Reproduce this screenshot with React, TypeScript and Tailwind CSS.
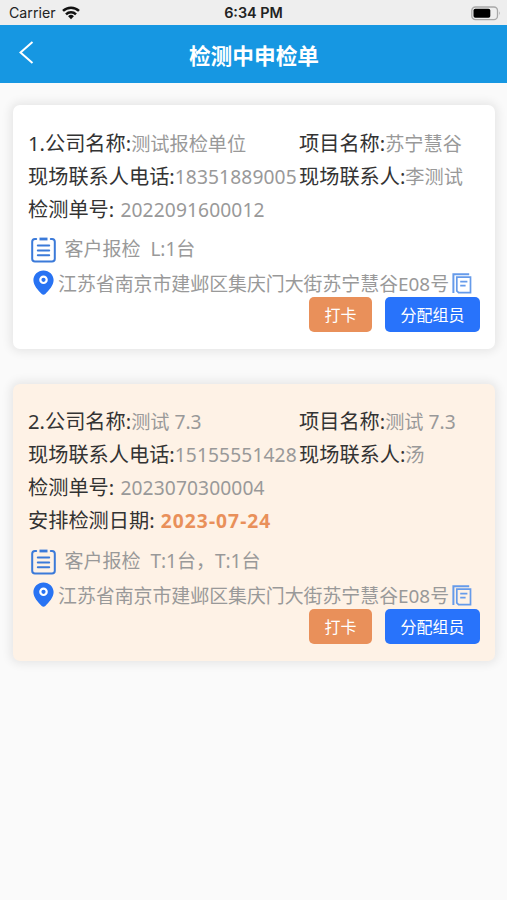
import type { ReactNode } from "react";

type Order = {
  company: string;
  project: string;
  phone: string;
  contact: string;
  code: string;
  date?: string;
  items: string;
  address: string;
};

const orders: Order[] = [
  {
    company: "测试报检单位",
    project: "苏宁慧谷",
    phone: "18351889005",
    contact: "李测试",
    code: "2022091600012",
    items: "L:1台",
    address: "江苏省南京市建邺区集庆门大街苏宁慧谷E08号",
  },
  {
    company: "测试 7.3",
    project: "测试 7.3",
    phone: "15155551428",
    contact: "汤",
    code: "2023070300004",
    date: "2023-07-24",
    items: "T:1台，T:1台",
    address: "江苏省南京市建邺区集庆门大街苏宁慧谷E08号",
  },
];

export default function App() {
  return (
    <div className="min-h-screen w-full overflow-hidden bg-[#fafafa] font-['Noto_Sans','Noto_Sans_CJK_SC',sans-serif]">
      <StatusBar />
      <Header />
      <main className="flex flex-col gap-[35px] pt-[22px] pr-3 pl-[13px]">
        {orders.map((order, i) => (
          <OrderCard key={order.code} order={order} index={i + 1} />
        ))}
      </main>
    </div>
  );
}

function StatusBar() {
  return (
    <div className="grid h-[25px] grid-cols-3 items-center bg-[#eeeeee] pr-[6px] pl-[9px] pt-px font-['Inter',sans-serif] text-[#222]">
      <div className="flex items-center gap-[6px] text-[14.2px]">
        <span>Carrier</span>
        <WifiIcon className="h-[14px] w-[18px]" />
      </div>
      <span className="pr-[3px] text-center text-[14.4px] font-semibold whitespace-nowrap">6:34 PM</span>
      <BatteryIcon className="h-[15px] w-[30px] justify-self-end" />
    </div>
  );
}

function Header() {
  return (
    <header className="grid h-[58px] grid-cols-[60px_1fr_60px] items-center bg-[#1697e2] text-white">
      <BackIcon className="ml-[19px] mb-1 h-[23px] w-[15px]" />
      <h1 className="pt-[3px] pl-px text-center text-[21.7px] leading-8 font-bold">检测中申检单</h1>
    </header>
  );
}

function OrderCard({ order, index }: { order: Order; index: number }) {
  return (
    <section
      className={`flex flex-col rounded-[7px] pr-[15px] pl-[15px] shadow-[0_0_10px_3px_rgba(0,0,0,0.08)] ${
        order.date ? "h-[277px] bg-[#fef2e6] pt-[20px]" : "h-[244px] bg-white pt-[21px]"
      }`}
    >
      <div className="grid grid-cols-[271px_1fr]">
        <Field label={`${index}.公司名称:`}>{order.company}</Field>
        <Field label="项目名称:">{order.project}</Field>
        <Field label="现场联系人电话:">
          <span className="tracking-[0.12px]">{order.phone}</span>
        </Field>
        <Field label="现场联系人:">{order.contact}</Field>
      </div>
      <Field label="检测单号: ">
        <span className="ml-px tracking-[0.12px]">{order.code}</span>
      </Field>
      {order.date && (
        <Field label="安排检测日期: ">
          <b className="ml-px tracking-[1.05px] text-[#e9905a]">{order.date}</b>
        </Field>
      )}
      <div
        className={`flex h-9 items-center text-[19px] text-[#999] whitespace-pre ${
          order.date ? "mt-[7px]" : "mt-[6px]"
        }`}
      >
        <ListIcon className="mt-[2px] ml-[3px] mr-[8.5px] h-[26px] w-[25px]" />
        <span>{"客户报检  " + order.items}</span>
      </div>
      <div className="flex h-[30px] items-center pt-[5px] text-[18.9px] whitespace-nowrap text-[#999]">
        <PinIcon className="mb-1 ml-[5px] mr-[4px] h-[25px] w-[21px]" />
        <span>{order.address}</span>
        <CopyIcon className="mb-[2px] ml-[3px] h-[21px] w-[20px] shrink-0" />
      </div>
      <div className="flex justify-end gap-[13px] text-[16px] leading-[34px] text-white">
        <button className="h-[35px] w-[63px] rounded-[5px] bg-[#e9905a]">打卡</button>
        <button className="h-[35px] w-[95px] rounded-[5px] bg-[#2873fb]">分配组员</button>
      </div>
    </section>
  );
}

function Field({ label, children }: { label: string; children: ReactNode }) {
  return (
    <div className="flex h-[33px] items-center pt-[2px] text-[20.2px] leading-[33px] whitespace-pre text-[#333]">
      <span>{label}</span>
      <span className="text-[19.2px] text-[#999]">{children}</span>
    </div>
  );
}

function WifiIcon(props: any) {
  return (
    <svg {...props} viewBox="0 0 18 14" fill="none" stroke="#111" strokeWidth="2.5">
      <path d="M1 4.9a11.5 11.5 0 0 1 16 0" />
      <path d="M4 8.3a7.2 7.2 0 0 1 10 0" />
      <path d="M9 13.2 6.1 10.3a4.1 4.1 0 0 1 5.8 0z" fill="#111" stroke="none" />
    </svg>
  );
}

function BatteryIcon(props: any) {
  return (
    <svg {...props} viewBox="0 0 30 15" fill="none">
      <rect x="0.8" y="1" width="25.7" height="12.6" rx="3.6" stroke="#a8a8a8" strokeWidth="1.3" />
      <rect x="2.5" y="2.8" width="16.8" height="9" rx="1.8" fill="#000" />
      <path d="M28 5.3q1.8 2 0 4z" fill="#a8a8a8" />
    </svg>
  );
}

function BackIcon(props: any) {
  return (
    <svg {...props} viewBox="0 0 15 23" fill="none" stroke="currentColor" strokeWidth="2">
      <path d="M13.5 1 1.5 11.5l12 10.5" />
    </svg>
  );
}

function ListIcon(props: any) {
  return (
    <svg {...props} viewBox="0 0 25 26" fill="none" stroke="#3b7ad9" strokeWidth="2" strokeLinecap="round">
      <path d="M5.2 2H4Q1.2 2 1.2 4.8v16.9q0 2.8 2.8 2.8h17q2.8 0 2.8-2.8V4.8Q23.8 2 21 2h-1.2" />
      <path d="M8.5 2h8" strokeWidth="2.8" strokeLinecap="butt" />
      <path d="M6.8 8.6h11.4M6.8 13.4h11.4M6.8 18.2h11.4" />
    </svg>
  );
}

function PinIcon(props: any) {
  return (
    <svg {...props} viewBox="0 0 21 25">
      <path
        d="M10.5.4C4.8.4.4 4.7.4 10.1c0 5.5 4.6 10.2 8.3 13.9q1.8 1.5 3.6 0c3.7-3.7 8.3-8.4 8.3-13.9C20.6 4.7 16.2.4 10.5.4z"
        fill="#2873f3"
      />
      <circle cx="10.5" cy="9.8" r="3.2" fill="#2873f3" stroke="#fff" strokeWidth="2.2" />
    </svg>
  );
}

function CopyIcon(props: any) {
  return (
    <svg {...props} viewBox="0 0 20 21" fill="none" stroke="#669bea" strokeWidth="1.7">
      <path d="M1.4 20V1.3h15.8" strokeWidth="2" />
      <path d="M4.8 4.2h13.7v15.5H6.6L4.8 17.9z" />
      <path d="M8.2 8.6h7.2M8.2 12.6h5.4" />
    </svg>
  );
}
